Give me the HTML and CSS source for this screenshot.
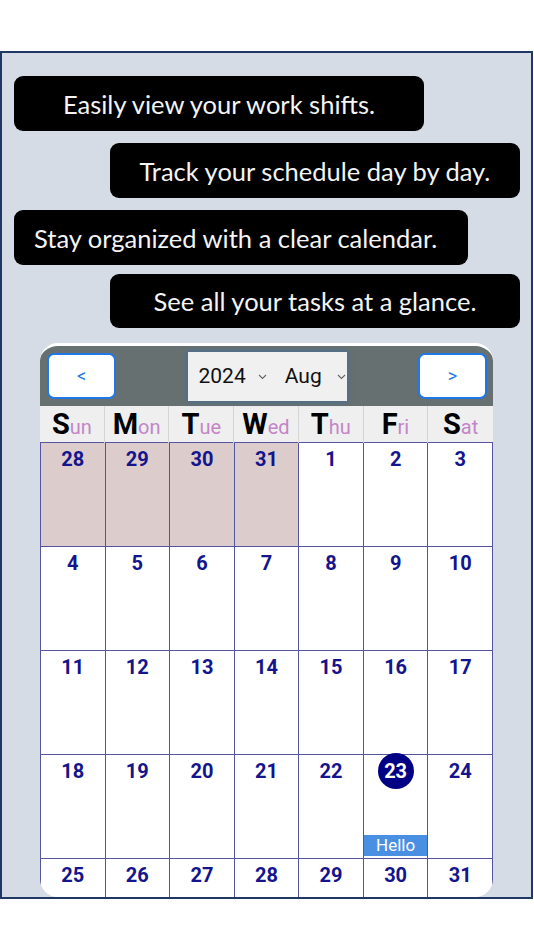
FILE: index.html
```html
<!DOCTYPE html>
<html>
<head>
<meta charset="utf-8">
<link rel="stylesheet" href="styles.css">
</head>
<body>
<div class="frame">
  <div class="bubble b1">Easily view your work shifts.</div>
  <div class="bubble b2">Track your schedule day by day.</div>
  <div class="bubble b3">Stay organized with a clear calendar.</div>
  <div class="bubble b4">See all your tasks at a glance.</div>

  <div class="calendar">
    <div class="cal-head">
      <button class="nav">&lt;</button>
      <div class="picker">
        <span class="opt year">2024<svg class="chev" width="9" height="6" viewBox="0 0 9 6"><path d="M1 1l3.5 3.5L8 1" fill="none" stroke="#666" stroke-width="1.1"/></svg></span>
        <span class="opt month">Aug<svg class="chev" width="9" height="6" viewBox="0 0 9 6"><path d="M1 1l3.5 3.5L8 1" fill="none" stroke="#666" stroke-width="1.1"/></svg></span>
      </div>
      <button class="nav">&gt;</button>
    </div>
    <div class="weekdays">
      <div class="wd"><b>S</b><span>un</span></div>
      <div class="wd"><b>M</b><span>on</span></div>
      <div class="wd"><b>T</b><span>ue</span></div>
      <div class="wd"><b>W</b><span>ed</span></div>
      <div class="wd"><b>T</b><span>hu</span></div>
      <div class="wd"><b>F</b><span>ri</span></div>
      <div class="wd"><b>S</b><span>at</span></div>
    </div>
    <div class="days">
      <div class="cell other"><div class="n">28</div></div>
      <div class="cell other"><div class="n">29</div></div>
      <div class="cell other"><div class="n">30</div></div>
      <div class="cell other"><div class="n">31</div></div>
      <div class="cell"><div class="n">1</div></div>
      <div class="cell"><div class="n">2</div></div>
      <div class="cell"><div class="n">3</div></div>

      <div class="cell"><div class="n">4</div></div>
      <div class="cell"><div class="n">5</div></div>
      <div class="cell"><div class="n">6</div></div>
      <div class="cell"><div class="n">7</div></div>
      <div class="cell"><div class="n">8</div></div>
      <div class="cell"><div class="n">9</div></div>
      <div class="cell"><div class="n">10</div></div>

      <div class="cell"><div class="n">11</div></div>
      <div class="cell"><div class="n">12</div></div>
      <div class="cell"><div class="n">13</div></div>
      <div class="cell"><div class="n">14</div></div>
      <div class="cell"><div class="n">15</div></div>
      <div class="cell"><div class="n">16</div></div>
      <div class="cell"><div class="n">17</div></div>

      <div class="cell"><div class="n">18</div></div>
      <div class="cell"><div class="n">19</div></div>
      <div class="cell"><div class="n">20</div></div>
      <div class="cell"><div class="n">21</div></div>
      <div class="cell"><div class="n">22</div></div>
      <div class="cell"><div class="n today">23</div><div class="ev">Hello</div></div>
      <div class="cell"><div class="n">24</div></div>

      <div class="cell"><div class="n">25</div></div>
      <div class="cell"><div class="n">26</div></div>
      <div class="cell"><div class="n">27</div></div>
      <div class="cell"><div class="n">28</div></div>
      <div class="cell"><div class="n">29</div></div>
      <div class="cell"><div class="n">30</div></div>
      <div class="cell"><div class="n">31</div></div>
    </div>
  </div>
</div>
</body>
</html>
```

FILE: styles.css
```css
html, body {
  margin: 0;
  padding: 0;
  background: #ffffff;
}

.frame {
  margin-top: 51px;
  width: 533px;
  height: 848px;
  box-sizing: border-box;
  border: 2px solid #203864;
  background: #d6dce5;
  padding: 23px 0 0 12px;
  overflow: hidden;
}

.bubble {
  height: 55px;
  box-sizing: border-box;
  background: #000000;
  color: #f4f4f4;
  border-radius: 9px;
  font-family: Lato, "Open Sans", sans-serif;
  font-size: 25.5px;
  display: flex;
  align-items: center;
  justify-content: center;
}

.b1 { width: 410px; }
.b2 { width: 410px; margin-left: 96px; margin-top: 12px; }
.b3 { width: 454px; margin-top: 12px; justify-content: flex-start; padding-left: 20px; }
.b4 { width: 410px; margin-left: 96px; margin-top: 9px; height: 54px; }

.calendar {
  margin-left: 26px;
  margin-top: 15px;
  width: 453px;
  height: 554px;
  box-sizing: border-box;
  border-top: 3px solid #ffffff;
  border-radius: 18px;
  background: #ffffff;
  overflow: hidden;
  font-family: Roboto, "Noto Sans", sans-serif;
}

.cal-head {
  height: 60px;
  background: #677070;
  display: flex;
  align-items: center;
  justify-content: space-between;
  padding: 0 6px 0 7px;
}

.nav {
  width: 69px;
  height: 46px;
  box-sizing: border-box;
  border: 2px solid #1f78e6;
  border-radius: 7px;
  background: #ffffff;
  color: #1f78e6;
  font-family: Roboto, sans-serif;
  font-size: 18px;
  padding: 0;
  margin-top: -1px;
}

.picker {
  width: 159px;
  height: 49px;
  box-sizing: border-box;
  background: #f0f0f0;
  box-shadow: 0 0 5px 1px rgba(60, 110, 170, 0.75);
  display: flex;
  align-items: center;
  padding-left: 11px;
  font-size: 21px;
  color: #111111;
}

.opt {
  display: inline-flex;
  align-items: center;
}

.chev {
  margin-left: 12px;
  margin-top: 1px;
}

.month {
  margin-left: 18px;
}

.month .chev {
  margin-left: 15px;
}

.weekdays {
  display: grid;
  grid-template-columns: repeat(7, 1fr);
  height: 36px;
  background: #efefef;
}

.wd {
  display: flex;
  justify-content: center;
  align-items: baseline;
  border-right: 1px solid #d4d4d4;
  line-height: 36px;
}

.wd:last-child {
  border-right: none;
}

.wd b {
  font-size: 29px;
  font-weight: 700;
  color: #000000;
}

.wd span {
  font-size: 20px;
  color: #c385c8;
}

.days {
  display: grid;
  grid-template-columns: repeat(7, 1fr);
  grid-auto-rows: 104px;
  border-top: 1px solid #55559f;
  border-left: 1px solid #55559f;
}

.cell {
  box-sizing: border-box;
  border-right: 1px solid #55559f;
  border-bottom: 1px solid #55559f;
  display: flex;
  flex-direction: column;
  align-items: stretch;
}

.cell.other {
  background: #dccccc;
}

.n {
  width: 36px;
  height: 36px;
  line-height: 36px;
  margin: -2px auto 0;
  border-radius: 50%;
  text-align: center;
  font-size: 20px;
  font-weight: 700;
  color: #14148c;
}

.n.today {
  background: #000085;
  color: #ffffff;
}

.ev {
  margin-top: auto;
  margin-bottom: 2px;
  height: 21px;
  line-height: 21px;
  background: #4a90e2;
  color: #ffffff;
  font-size: 17px;
  text-align: center;
}
```
